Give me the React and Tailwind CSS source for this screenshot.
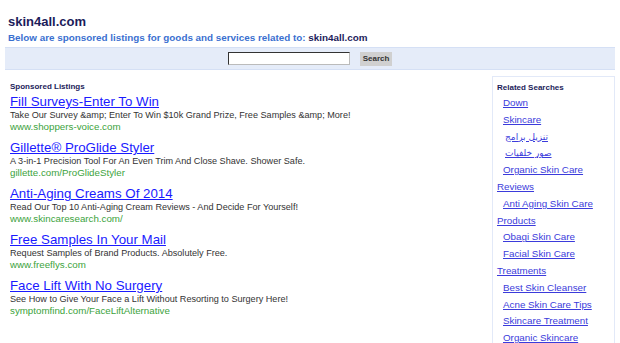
import React from "react";

const ads = [
  {
    t: "Fill Surveys-Enter To Win",
    d: "Take Our Survey &amp; Enter To Win $10k Grand Prize, Free Samples &amp; More!",
    u: "www.shoppers-voice.com",
  },
  {
    t: "Gillette® ProGlide Styler",
    d: "A 3-in-1 Precision Tool For An Even Trim And Close Shave. Shower Safe.",
    u: "gillette.com/ProGlideStyler",
  },
  {
    t: "Anti-Aging Creams Of 2014",
    d: "Read Our Top 10 Anti-Aging Cream Reviews - And Decide For Yourself!",
    u: "www.skincaresearch.com/",
  },
  {
    t: "Free Samples In Your Mail",
    d: "Request Samples of Brand Products. Absolutely Free.",
    u: "www.freeflys.com",
  },
  {
    t: "Face Lift With No Surgery",
    d: "See How to Give Your Face a Lift Without Resorting to Surgery Here!",
    u: "symptomfind.com/FaceLiftAlternative",
  },
];

const related = [
  ["Down", 1],
  ["Skincare", 1],
  ["تنزيل برامج", 2],
  ["صور خلفيات", 2],
  ["Organic Skin Care", 1],
  ["Reviews", 0],
  ["Anti Aging Skin Care", 1],
  ["Products", 0],
  ["Obagi Skin Care", 1],
  ["Facial Skin Care", 1],
  ["Treatments", 0],
  ["Best Skin Cleanser", 1],
  ["Acne Skin Care Tips", 1],
  ["Skincare Treatment", 1],
  ["Organic Skincare", 1],
];

export default function App() {
  return (
    <div className="w-[620px] h-[343px] overflow-hidden bg-white" style={{ fontFamily: "'Liberation Sans', Arial, sans-serif" }}>
      <div className="pl-[8px] pt-[14px]">
        <div className="text-[13px] font-bold leading-[16px] text-[#1c1c5a]">
          skin4all.com
        </div>
        <div className="mt-[1px] text-[9.85px] font-bold leading-[14px] text-[#3a6fd0]">
          Below are sponsored listings for goods and services related to: <span className="text-[#1c1c5a]">skin4all.com</span>
        </div>
      </div>
      <div className="mx-[5px] mt-[2px] h-[23px] bg-[#e5ecf9] border-y border-[#d5e0f5] flex items-center justify-center gap-[10px]">
        <div className="w-[122px] h-[13px] bg-white border border-[#333] border-r-[#bbb] border-b-[#bbb]"></div>
        <div className="w-[32px] h-[14px] bg-[#d0d0d0] flex items-center justify-center text-[8px] font-bold text-[#333]">
          Search
        </div>
      </div>
      <div className="flex mt-[6px]">
        <div className="flex-1 pl-[10px] pt-[5px]">
          <div className="text-[8px] font-bold leading-[12px] text-[#1c1c5a]">
            Sponsored Listings
          </div>
          <div className="mt-[1px]">
            {ads.map((a) => (
              <div key={a.t} className="mb-[8px]">
                <div className="text-[13.3px] leading-[16px] text-[#1a1aff] underline underline-offset-[1px]">{a.t}</div>
                <div className="text-[9.1px] leading-[11px] text-[#333]">{a.d}</div>
                <div className="text-[9.75px] leading-[11px] text-[#3ca33c]">{a.u}</div>
              </div>
            ))}
          </div>
        </div>
        <div className="w-[123px] mr-[5px] border border-[#e2e9f8] border-b-0 pl-[4px] pt-[5px] h-[300px]">
          <div className="text-[8px] font-bold leading-[12px] text-[#1c1c5a]">
            Related Searches
          </div>
          <div className="mt-[1px]">
            {related.map(([r, lvl]) => (
              <div key={r} className={"text-[9.8px] leading-[16.8px] " + (lvl === 0 ? "pl-0" : lvl === 1 ? "pl-[6px]" : "pl-[8px]")}>
                <span className="text-[#3b3bdb] underline underline-offset-[1px]" style={lvl === 2 ? { fontFamily: "'DejaVu Sans', sans-serif", fontSize: "9px" } : undefined}>{r}</span>
              </div>
            ))}
          </div>
        </div>
      </div>
    </div>
  );
}
